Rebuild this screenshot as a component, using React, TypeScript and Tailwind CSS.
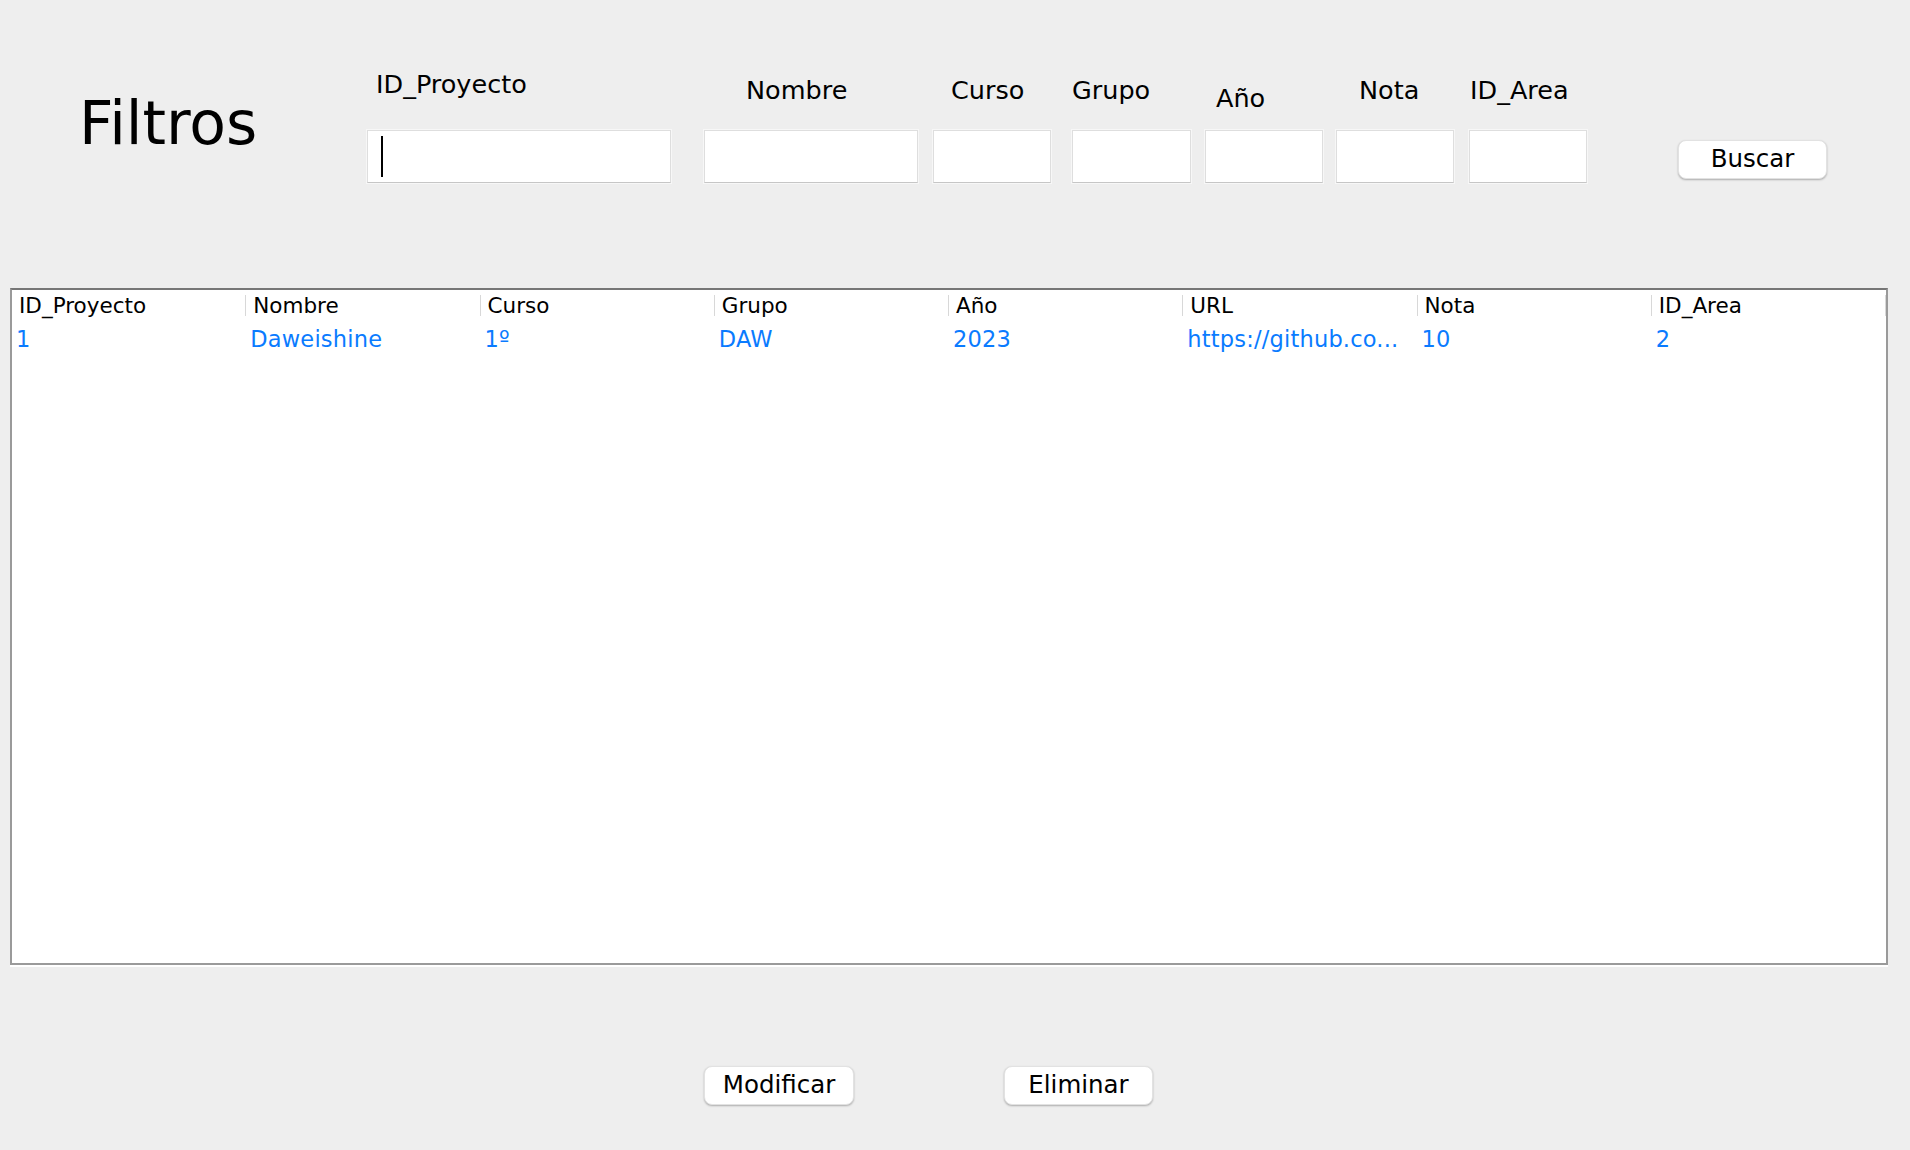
import React from 'react'

interface IField {
  label: string
  inputW: string
  gap: string
  labelPad: string
  caret?: boolean
}

const fields: IField[] = [
  { label: 'ID_Proyecto', inputW: 'w-[304px]', gap: 'ml-0', labelPad: 'pt-[12px] pl-[9px]', caret: true },
  { label: 'Nombre', inputW: 'w-[214px]', gap: 'ml-[33px]', labelPad: 'pt-[18px] pl-[42px]' },
  { label: 'Curso', inputW: 'w-[118px]', gap: 'ml-[15px]', labelPad: 'pt-[18px] pl-[18px]' },
  { label: 'Grupo', inputW: 'w-[119px]', gap: 'ml-[21px]', labelPad: 'pt-[18px] pl-0' },
  { label: 'Año', inputW: 'w-[118px]', gap: 'ml-[14px]', labelPad: 'pt-[26px] pl-[11px]' },
  { label: 'Nota', inputW: 'w-[118px]', gap: 'ml-[13px]', labelPad: 'pt-[18px] pl-[23px]' },
  { label: 'ID_Area', inputW: 'w-[118px]', gap: 'ml-[15px]', labelPad: 'pt-[18px] pl-[1px]' },
]

const columns = ['ID_Proyecto', 'Nombre', 'Curso', 'Grupo', 'Año', 'URL', 'Nota', 'ID_Area']
const row = ['1', 'Daweishine', '1º', 'DAW', '2023', 'https://github.co...', '10', '2']

function MacButton({ children, className }: { children: React.ReactNode; className?: string }) {
  return (
    <button
      className={`
        flex h-[39px] items-center justify-center rounded-[8px] border border-[#e2e2e2] bg-white
        text-[24.5px] leading-none text-black shadow-[0_1px_2px_rgba(0,0,0,0.28)]
        ${className ?? ''}
      `}
    >
      {children}
    </button>
  )
}

export default function App() {
  return (
    <div className="min-h-[1150px] w-full bg-[#eeeeee] font-['DejaVu_Sans',sans-serif] text-black">
      {/* filtros */}
      <div className="flex pt-[60px] pl-[79px]">
        <div className="w-[288px] pt-[33px] text-[60px] leading-none">Filtros</div>

        {fields.map((f) => (
          <div key={f.label} className={`flex flex-col ${f.gap}`}>
            <div className={`h-[70px] text-[25.5px] leading-none whitespace-nowrap ${f.labelPad}`}>{f.label}</div>
            <div
              className={`
                flex h-[53px] items-center border border-[#dedede] border-b-[#c6c6c6] bg-white
                ring-1 ring-[#f7f7f7] ${f.inputW}
              `}
            >
              {f.caret && <div className="ml-[13px] h-[41px] w-[2px] bg-black" />}
            </div>
          </div>
        ))}

        <div className="ml-[91px] pt-[80px]">
          <MacButton className="w-[149px]">Buscar</MacButton>
        </div>
      </div>

      {/* tabla */}
      <div className="mt-[105px] ml-[10px] w-[1878px]">
        <div className="h-[677px] border-2 border-[#9a9a9a] border-t-[#767676] bg-white">
          <div className="flex h-[31px] items-center">
            {columns.map((c) => (
              <div
                key={c}
                className="flex h-[21px] flex-1 items-center border-r border-[#d8d8d8] pl-[7px] text-[21.5px] leading-none"
              >
                {c}
              </div>
            ))}
          </div>
          <div className="flex h-[36px] items-center">
            {row.map((v, i) => (
              <div
                key={i}
                className="flex-1 overflow-hidden pl-[4px] text-[22.5px] leading-[30px] tracking-[0.2px] whitespace-nowrap text-[#0a7bff]"
              >
                {v}
              </div>
            ))}
          </div>
        </div>
        <div className="h-[2px] bg-white" />
      </div>

      {/* acciones */}
      <div className="mt-[99px] flex gap-[150px] pl-[704px]">
        <MacButton className="w-[150px]">Modificar</MacButton>
        <MacButton className="w-[149px]">Eliminar</MacButton>
      </div>
    </div>
  )
}
